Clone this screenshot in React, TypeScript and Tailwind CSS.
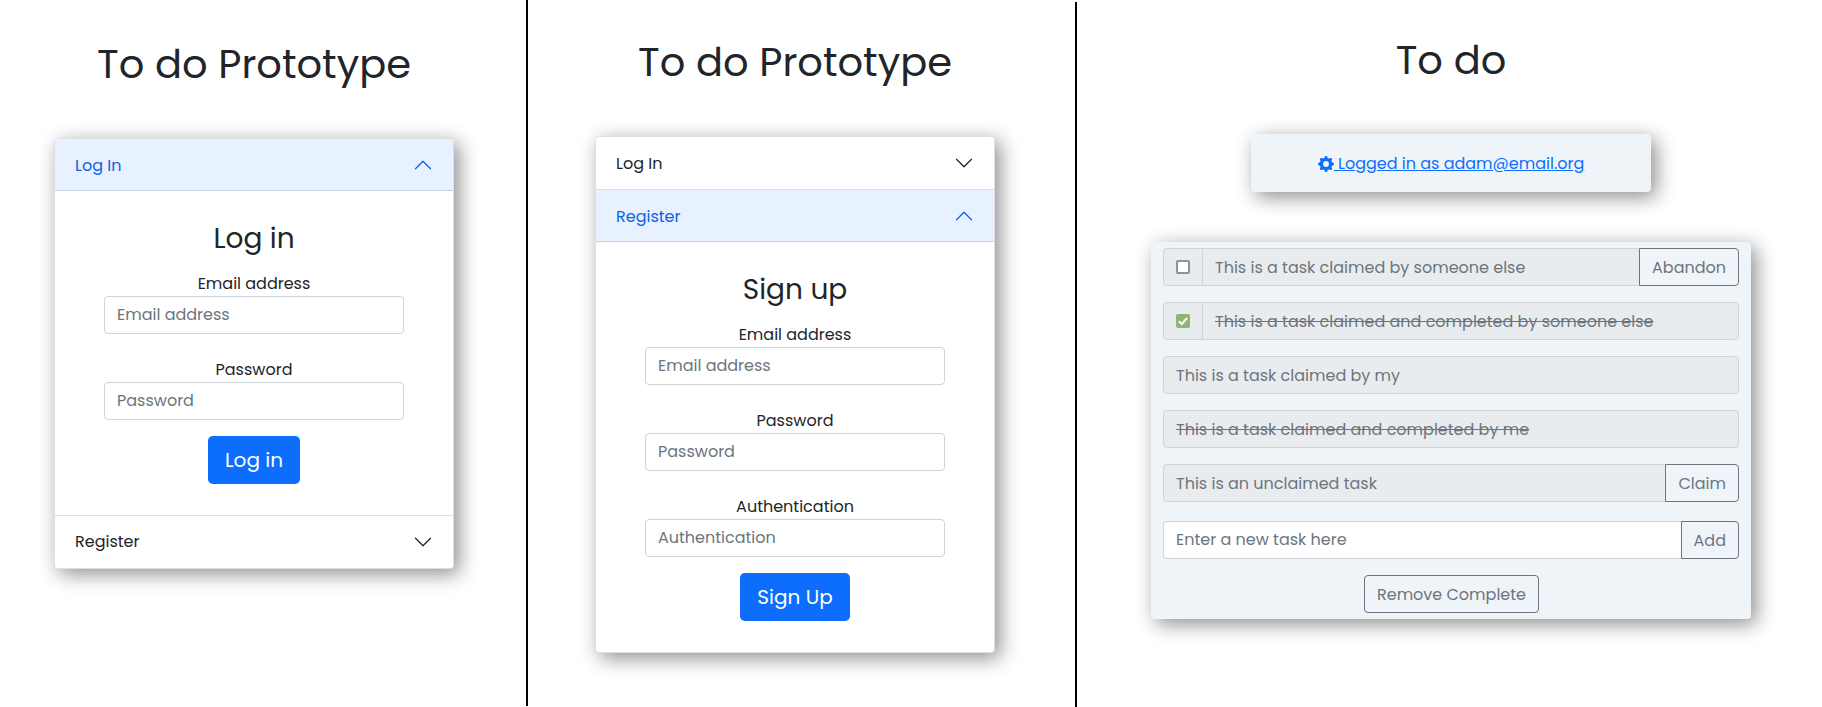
import type { ReactNode } from "react";
import { BsChevronDown, BsChevronUp, BsGearFill } from "react-icons/bs";

const SHADOW = "shadow-[5px_5px_20px_rgba(0,0,0,0.45)]";

function Title({ children, className }: { children: ReactNode; className: string }) {
  return <h1 className={`text-center text-[40px] leading-[48px] ${className}`}>{children}</h1>;
}

function AccordionHeader({ label, open, last }: { label: string; open?: boolean; last?: boolean }) {
  return (
    <button
      className={`flex h-[52px] w-full items-center justify-between px-5 ${
        open ? "bg-[#e7f1ff] text-[#0c63e4] shadow-[inset_0_-1px_0_rgba(0,0,0,0.125)]" : "bg-white"
      }`}
    >
      <span className={last ? "" : "pt-0.5"}>{label}</span>
      {open ? <BsChevronUp className="size-5" /> : <BsChevronDown className="size-5" />}
    </button>
  );
}

function Field({ label, className = "" }: { label: string; className?: string }) {
  return (
    <div className={`flex w-[300px] flex-col ${className}`}>
      <label className="h-[25px] pt-px text-center leading-6">{label}</label>
      <input
        placeholder={label}
        className="h-[38px] rounded border border-[#ced4da] px-3 pt-[5px] pb-[7px] placeholder:text-[#6c757d]"
      />
    </div>
  );
}

function SubmitButton({ children, className }: { children: ReactNode; className: string }) {
  return (
    <button className={`mt-4 h-12 rounded-[4.8px] bg-[#0d6efd] pb-px text-xl leading-[30px] text-white ${className}`}>
      {children}
    </button>
  );
}

function Tick({ checked }: { checked: boolean }) {
  return (
    <div className="flex w-[40px] items-center rounded-l border border-r-0 border-[#ced4da] bg-[#e9ecef] pl-3">
      {checked ? (
        <span className="size-3.5 rounded-xs bg-[#93b373]">
          <svg viewBox="0 0 14 14" className="size-3.5" fill="none" stroke="white" strokeWidth="2">
            <path d="M2.8 7.2 5.8 10 11.2 3.8" />
          </svg>
        </span>
      ) : (
        <span className="size-3.5 rounded-xs border-2 border-[#8f8f9d] bg-white" />
      )}
    </div>
  );
}

type Task = {
  text: string;
  done?: boolean;
  tick?: boolean;
  action?: string;
};

const tasks: Task[] = [
  { text: "This is a task claimed by someone else", tick: true, action: "Abandon" },
  { text: "This is a task claimed and completed by someone else", tick: true, done: true },
  { text: "This is a task claimed by my" },
  { text: "This is a task claimed and completed by me", done: true },
  { text: "This is an unclaimed task", action: "Claim" },
];

function OutlineButton({ children, className }: { children: ReactNode; className: string }) {
  return (
    <button className={`h-[38px] border border-[#6c757d] pt-0.5 text-center leading-6 text-[#6c757d] ${className}`}>
      {children}
    </button>
  );
}

function TaskRow({ task }: { task: Task }) {
  return (
    <div className="flex h-[38px]">
      {task.tick && <Tick checked={!!task.done} />}
      <div
        className={`flex-1 border border-[#ced4da] bg-[#e9ecef] px-3 pt-[7px] leading-6 text-[#6c757d] ${
          task.tick ? "-ml-px" : "rounded-l"
        } ${task.action ? "border-r-0" : "rounded-r"} ${task.done ? "line-through" : ""}`}
      >
        {task.text}
      </div>
      {task.action && <OutlineButton className="rounded-r px-3">{task.action}</OutlineButton>}
    </div>
  );
}

export default function App() {
  return (
    <div className="flex h-[707px] w-[1822px] overflow-hidden bg-white text-base leading-6 text-[#212529] [font-family:Poppins,Inter,sans-serif]">
      <section className="h-[706px] w-[528px] border-r-2 border-black pl-[54px]">
        <div className="w-[400px]">
          <Title className="pt-10">To do Prototype</Title>
          <div className={`mt-[50px] overflow-hidden rounded border border-[#dfdfdf] bg-white ${SHADOW}`}>
            <AccordionHeader label="Log In" open />
            <div className="flex h-[324px] flex-col items-center pt-7">
              <h2 className="mb-3 h-10 text-[28px] leading-10">Log in</h2>
              <Field label="Email address" />
              <Field label="Password" className="mt-[23px]" />
              <SubmitButton className="w-[92px]">Log in</SubmitButton>
            </div>
            <div className="border-t border-[#dfdfdf]">
              <AccordionHeader label="Register" last />
            </div>
          </div>
        </div>
      </section>

      <section className="mt-0.5 h-[705px] w-[549px] border-r-2 border-black pl-[67px]">
        <div className="w-[400px]">
          <Title className="pt-9">To do Prototype</Title>
          <div className={`mt-[50px] overflow-hidden rounded border border-[#dfdfdf] bg-white ${SHADOW}`}>
            <AccordionHeader label="Log In" />
            <div className="border-t border-[#dfdfdf]">
              <AccordionHeader label="Register" open />
            </div>
            <div className="flex h-[410px] flex-col items-center pt-7">
              <h2 className="mb-3 h-10 text-[28px] leading-10">Sign up</h2>
              <Field label="Email address" />
              <Field label="Password" className="mt-[23px]" />
              <Field label="Authentication" className="mt-[23px]" />
              <SubmitButton className="w-[110px]">Sign Up</SubmitButton>
            </div>
          </div>
        </div>
      </section>

      <section className="flex flex-1 flex-col pl-[74px]">
        <div className="flex w-[600px] flex-col items-center">
          <Title className="pt-9">To do</Title>
          <div
            className={`mt-[50px] flex h-[58px] w-[400px] items-center justify-center rounded bg-[#eff4f9] text-[#0d6efd] ${SHADOW}`}
          >
            <a href="#" className="flex items-center">
              <BsGearFill className="mt-px size-4" />
              <span className="whitespace-pre pt-0.5 underline"> Logged in as adam@email.org</span>
            </a>
          </div>
          <div
            className={`mt-[50px] flex h-[377px] w-[600px] flex-col gap-4 rounded bg-[#eff4f9] px-3 pt-1.5 ${SHADOW}`}
          >
            {tasks.map((task) => (
              <TaskRow key={task.text} task={task} />
            ))}
            <div className="mt-[3px] flex h-[38px]">
              <input
                placeholder="Enter a new task here"
                className="flex-1 rounded-l border border-r-0 border-[#ced4da] bg-white px-3 py-1.5 placeholder:text-[#6c757d]"
              />
              <OutlineButton className="rounded-r px-3">Add</OutlineButton>
            </div>
            <OutlineButton className="ml-px w-[175px] self-center rounded">Remove Complete</OutlineButton>
          </div>
        </div>
      </section>
    </div>
  );
}
